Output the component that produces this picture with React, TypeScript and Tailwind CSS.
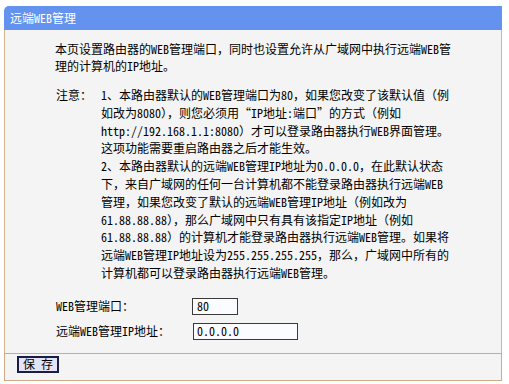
import React from "react";

const FONT = '"Noto Sans Mono CJK SC", "Noto Sans CJK SC", "Liberation Mono", monospace';

export default function App() {
  const noteLines = [
    "1、本路由器默认的WEB管理端口为80，如果您改变了该默认值（例",
    "如改为8080），则您必须用“IP地址:端口”的方式（例如",
    "http://192.168.1.1:8080）才可以登录路由器执行WEB界面管理。",
    "这项功能需要重启路由器之后才能生效。",
    "2、本路由器默认的远端WEB管理IP地址为0.0.0.0，在此默认状态",
    "下，来自广域网的任何一台计算机都不能登录路由器执行远端WEB",
    "管理，如果您改变了默认的远端WEB管理IP地址（例如改为",
    "61.88.88.88），那么广域网中只有具有该指定IP地址（例如",
    "61.88.88.88）的计算机才能登录路由器执行远端WEB管理。如果将",
    "远端WEB管理IP地址设为255.255.255.255，那么，广域网中所有的",
    "计算机都可以登录路由器执行远端WEB管理。",
  ];
  return (
    <div
      className="w-[509px] h-[384px] bg-white text-[12px] text-black"
      style={{ fontFamily: FONT }}
    >
      <div className="pt-[6px] pl-[4px] w-[502px]">
        <div className="h-[24px] bg-[#6393ef] rounded-tl-[5px] flex items-center pl-[6px] text-white text-[12px] leading-[12px]">
          远端WEB管理
        </div>
        <div className="border-l border-r border-[#d8b48c] bg-[#f4f4f4]">
          <div className="pt-[10px] pl-[50px] leading-[17px] whitespace-nowrap">
            <div>本页设置路由器的WEB管理端口，同时也设置允许从广域网中执行远端WEB管</div>
            <div>理的计算机的IP地址。</div>
          </div>
          <div className="flex pt-[12px] pl-[51px] leading-[17.8px] whitespace-nowrap">
            <div className="w-[45px]">注意：</div>
            <div>
              {noteLines.map((l, i) => (
                <div key={i}>{l}</div>
              ))}
            </div>
          </div>
          <div className="pl-[51px] pt-[16px] pb-[13px] flex flex-col gap-[8px]">
            <div className="flex items-center h-[17px]">
              <div className="w-[136px]">WEB管理端口：</div>
              <div className="w-[46px] h-[17px] border border-[#3a3a3a] bg-[#fbfcff] flex items-center pl-[4px] leading-[12px]">
                80
              </div>
            </div>
            <div className="flex items-center h-[17px]">
              <div className="w-[137px]">远端WEB管理IP地址：</div>
              <div className="w-[105px] h-[17px] border border-[#3a3a3a] bg-[#fbfcff] flex items-center pl-[3px] leading-[12px]">
                0.0.0.0
              </div>
            </div>
          </div>
        </div>
        <div className="border-t border-b border-l border-r border-[#d0aa88] bg-[#f4f4f4] pl-[12px] pt-[2px] pb-[7px]">
          <div className="w-[42px] h-[17px] border-2 border-[#1c1c44] bg-[#e4e4f8] flex items-center pl-[4px] text-[12px] leading-[12px] whitespace-pre">
            保 存
          </div>
        </div>
      </div>
    </div>
  );
}
